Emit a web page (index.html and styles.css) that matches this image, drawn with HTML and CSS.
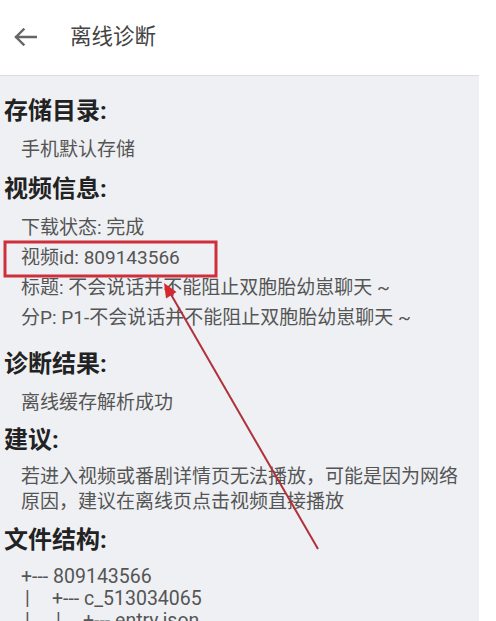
FILE: index.html
```html
<!DOCTYPE html>
<html lang="zh">
<head>
<meta charset="utf-8">
<title>离线诊断</title>
<link rel="stylesheet" href="styles.css">
</head>
<body>
<div class="app">
  <header class="topbar">
    <svg class="back" width="24" height="18" viewBox="0 0 24 18">
      <path d="M3 9H23M10.5 1.5L3 9l7.5 7.5" fill="none" stroke="#666" stroke-width="2.4" stroke-linecap="square" stroke-linejoin="miter"/>
    </svg>
    <h1 class="title">离线诊断</h1>
  </header>
  <main class="content">
    <section class="sec sec-storage">
      <h2 class="head">存储目录:</h2>
      <p class="line">手机默认存储</p>
    </section>
    <section class="sec sec-video">
      <h2 class="head">视频信息:</h2>
      <p class="line">下载状态: 完成</p>
      <p class="line">视频id: 809143566</p>
      <p class="line">标题: 不会说话并不能阻止双胞胎幼崽聊天 ~</p>
      <p class="line">分P: P1-不会说话并不能阻止双胞胎幼崽聊天 ~</p>
    </section>
    <section class="sec sec-result">
      <h2 class="head">诊断结果:</h2>
      <p class="line">离线缓存解析成功</p>
    </section>
    <section class="sec sec-advice">
      <h2 class="head">建议:</h2>
      <p class="para">若进入视频或番剧详情页无法播放，可能是因为网络原因，建议在离线页点击视频直接播放</p>
    </section>
    <section class="sec sec-files">
      <h2 class="head">文件结构:</h2>
      <div class="tree">
        <div class="row"><span class="node">+--- 809143566</span></div>
        <div class="row"><span class="indent">|</span><span class="node">+--- c_513034065</span></div>
        <div class="row"><span class="indent">|</span><span class="indent">|</span><span class="node">+--- entry.json</span></div>
      </div>
    </section>
  </main>
  <svg class="annot" width="496" height="621" viewBox="0 0 496 621">
    <rect x="5" y="242" width="211" height="34" fill="none" stroke="#cf2f3b" stroke-width="3"/>
    <line x1="318" y1="549" x2="169" y2="291" stroke="#b0303c" stroke-width="2"/>
    <polygon points="164,283 176.5,292 166,298.5" fill="#d8262f"/>
  </svg>
</div>
</body>
</html>
```

FILE: styles.css
```css
html, body {
  margin: 0;
  padding: 0;
  background: #ffffff;
}
body {
  font-family: Roboto, "Noto Sans CJK SC", sans-serif;
  width: 496px;
  height: 621px;
  overflow: hidden;
}
.app {
  position: relative;
  width: 479px;
  height: 621px;
}
.topbar {
  background: #ffffff;
  border-bottom: 1px solid #dcdde0;
  display: flex;
  align-items: center;
  box-sizing: border-box;
  height: 76px;
}
.back {
  margin-left: 13px;
  margin-top: -2px;
}
.title {
  margin: -2px 0 0 33px;
  font-size: 21.5px;
  font-weight: normal;
  color: #444;
  line-height: 28px;
}
.content {
  background: #eef0f3;
  height: 545px;
  padding: 19px 0 0 4px;
  box-sizing: border-box;
  overflow: hidden;
}
.sec {
  margin: 0;
}
.head {
  margin: 0 0 8px 0;
  font-size: 24px;
  line-height: 32px;
  font-weight: bold;
  color: #222;
}
.line {
  margin: 0;
  padding-left: 17px;
  font-size: 19px;
  line-height: 30px;
  color: #555;
}
.para {
  margin: 2px 0 0 0;
  padding-left: 17px;
  padding-right: 10px;
  font-size: 19px;
  line-height: 25px;
  color: #555;
}
.sec-video { margin-top: 8px; }
.sec-result { margin-top: 15px; }
.sec-advice { margin-top: 6px; }
.sec-files { margin-top: 10px; }
.tree {
  padding-left: 17px;
  padding-top: 2px;
  font-size: 19.5px;
  line-height: 22px;
  color: #555;
}
.row {
  display: flex;
  white-space: pre;
}
.indent {
  width: 31px;
  padding-left: 4px;
  box-sizing: border-box;
}
.annot {
  position: absolute;
  top: 0;
  left: 0;
  pointer-events: none;
}
```
